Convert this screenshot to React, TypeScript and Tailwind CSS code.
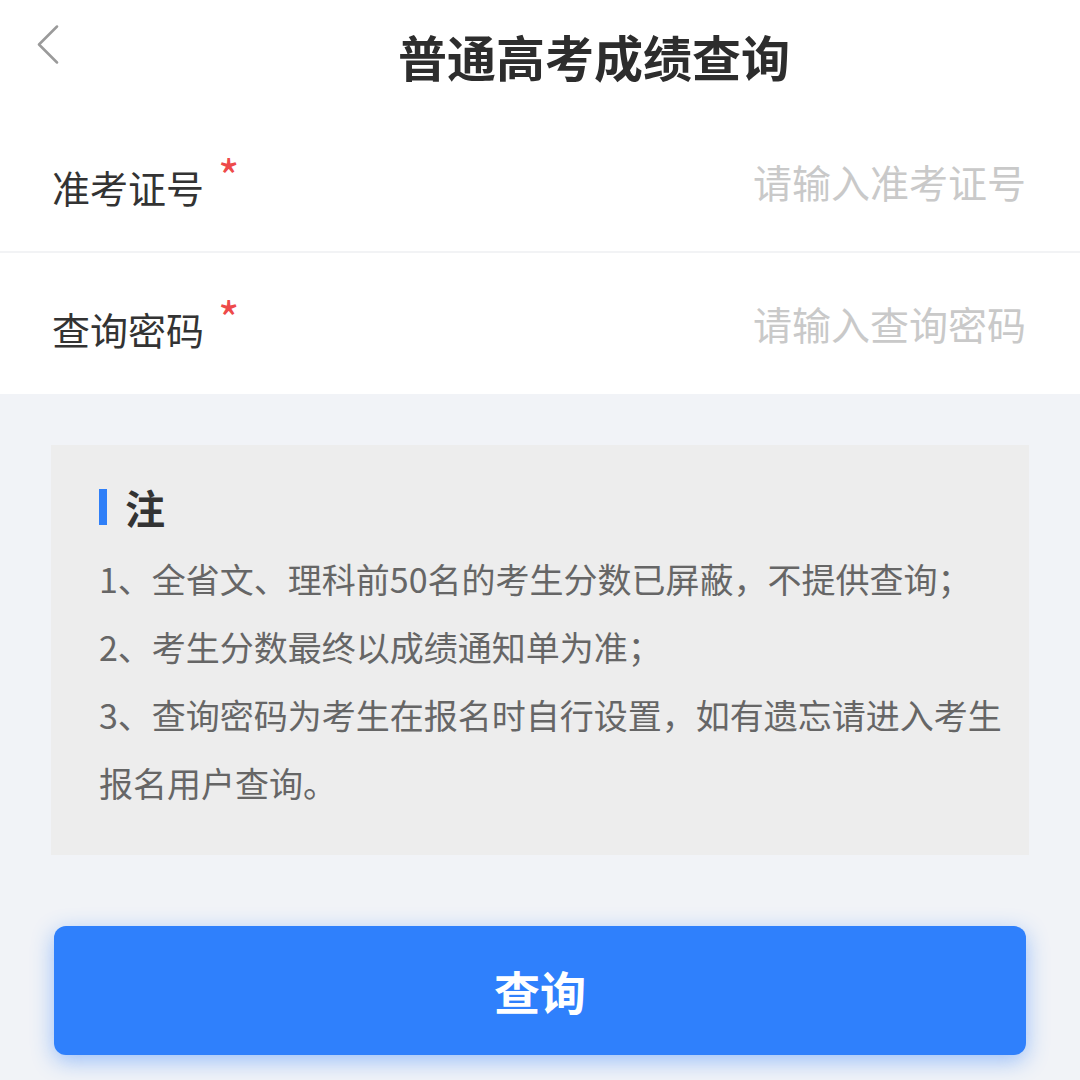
const FONT = { fontFamily: '"Noto Sans CJK SC", "Noto Sans", sans-serif' };

function Field({ label, placeholder, border }: { label: string; placeholder: string; border?: boolean }) {
  return (
    <div className={`flex items-center justify-between h-[141px] pl-[52px] pr-[54px] bg-white ${border ? "border-b-2 border-[#f2f3f5]" : ""}`}>
      <div className="flex items-start pt-[10px]">
        <span className="text-[38px] leading-none text-[#333333]">{label}</span>
        <span className="ml-[14px] -mt-[16px] text-[46px] leading-none text-[#ee4a4a]">*</span>
      </div>
      <span className="text-[39px] leading-none text-[#c9c9c9]">{placeholder}</span>
    </div>
  );
}

export default function App() {
  return (
    <div className="w-[1080px] h-[1080px] overflow-hidden bg-[#f1f3f7]" style={FONT}>
      <div className="bg-white">
        <div className="flex items-center h-[112px]">
          <div className="w-[108px] h-full flex items-start pt-[25px] pl-[37px]">
            <svg width="22" height="40" viewBox="0 0 22 40" fill="none">
              <path d="M20 1.5 L2 19.5 L20 37.5" stroke="#9a9a9a" strokeWidth="2.5" strokeLinecap="round" strokeLinejoin="round" />
            </svg>
          </div>
          <h1 className="flex-1 text-center text-[49px] font-bold leading-none text-[#2d2d2d] pb-[2px]">普通高考成绩查询</h1>
        </div>
        <Field label="准考证号" placeholder="请输入准考证号" border />
        <Field label="查询密码" placeholder="请输入查询密码" />
      </div>

      <div className="px-[51px] pt-[51px]">
        <div className="bg-[#ededed] pl-[48px] pr-[12px] pt-[42px] pb-[38px]">
          <div className="flex items-center gap-[18px]">
            <span className="w-[8px] h-[36px] bg-[#2f7ff8]" />
            <span className="text-[40px] font-bold leading-none text-[#333333]">注</span>
          </div>
          <div className="mt-[18px] text-[34px] leading-[68px] text-[#666666]">
            <p>1、全省文、理科前50名的考生分数已屏蔽，不提供查询；</p>
            <p>2、考生分数最终以成绩通知单为准；</p>
            <p>3、查询密码为考生在报名时自行设置，如有遗忘请进入考生报名用户查询。</p>
          </div>
        </div>
      </div>

      <div className="px-[54px] pt-[71px]">
        <button
          type="button"
          className="w-full h-[129px] rounded-[12px] bg-[#2f80fc] text-white text-[46px] font-bold shadow-[0_6px_22px_rgba(47,128,252,0.45)]"
          style={FONT}
        >
          查询
        </button>
      </div>
    </div>
  );
}
